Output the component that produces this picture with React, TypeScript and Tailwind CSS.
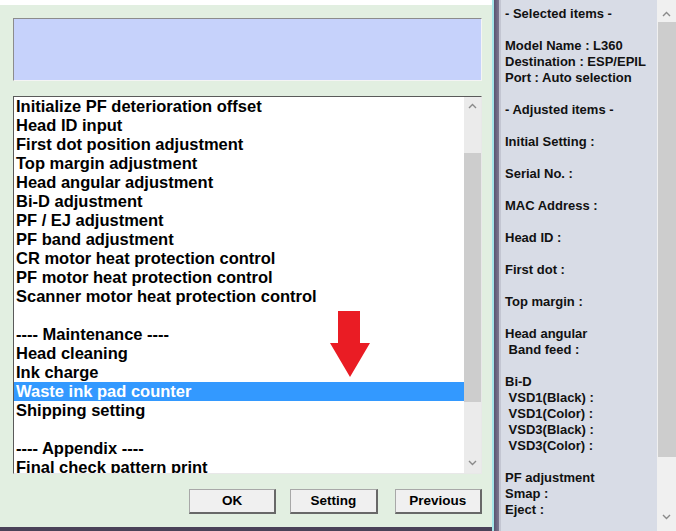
import React from "react";

const rows = [
  "Initialize PF deterioration offset",
  "Head ID input",
  "First dot position adjustment",
  "Top margin adjustment",
  "Head angular adjustment",
  "Bi-D adjustment",
  "PF / EJ adjustment",
  "PF band adjustment",
  "CR motor heat protection control",
  "PF motor heat protection control",
  "Scanner motor heat protection control",
  "",
  "---- Maintenance ----",
  "Head cleaning",
  "Ink charge",
  "Waste ink pad counter",
  "Shipping setting",
  "",
  "---- Appendix ----",
  "Final check pattern print",
];

const info = [
  "- Selected items -",
  "",
  "Model Name : L360",
  "Destination : ESP/EPIL",
  "Port : Auto selection",
  "",
  "- Adjusted items -",
  "",
  "Initial Setting :",
  "",
  "Serial No. :",
  "",
  "MAC Address :",
  "",
  "Head ID :",
  "",
  "First dot :",
  "",
  "Top margin :",
  "",
  "Head angular",
  " Band feed :",
  "",
  "Bi-D",
  " VSD1(Black) :",
  " VSD1(Color) :",
  " VSD3(Black) :",
  " VSD3(Color) :",
  "",
  "PF adjustment",
  "Smap :",
  "Eject :",
];

function Chevron({ up }: { up?: boolean }) {
  return (
    <svg width="9" height="6" viewBox="0 0 9 6" className="block">
      {up ? (
        <polyline points="1,5 4.5,1.5 8,5" fill="none" stroke="#8a8a8a" strokeWidth="1.4" />
      ) : (
        <polyline points="1,1 4.5,4.5 8,1" fill="none" stroke="#8a8a8a" strokeWidth="1.4" />
      )}
    </svg>
  );
}

function Btn({ label, className }: { label: string; className?: string }) {
  return (
    <div
      className={
        "flex h-[25px] items-center justify-center border border-[#a8a8a8] border-r-2 border-b-2 border-r-[#686868] border-b-[#686868] bg-[#f0f0f0] text-[13.5px] font-bold text-black " +
        (className ?? "")
      }
    >
      {label}
    </div>
  );
}

export default function App() {
  return (
    <div
      className="flex h-[531px] w-[676px] overflow-hidden bg-[#3e3850]"
      style={{ fontFamily: '"Liberation Sans", Arial, sans-serif' }}
    >
      {/* Left window */}
      <div className="flex w-[492px] flex-col">
        <div className="h-[5px] bg-white" />
        <div className="flex flex-1 flex-col bg-[#e2efe1] pl-[13px] pr-[10px] pt-[13px]">
          <div className="h-[63px] border border-[#8c8c8c] border-b-[#f4f4f4] border-r-[#f4f4f4] bg-[#c6d2fb]" />
          <div className="relative mt-[15px] flex h-[378px] border border-[#5a5a5a] border-b-[#e8e8e8] border-r-[#e8e8e8] bg-white">
            <div className="flex-1 overflow-hidden">
              {rows.map((r, i) => (
                <div
                  key={i}
                  className={
                    "h-[19px] whitespace-pre pl-[2px] text-[16.5px] font-bold leading-[19px] " +
                    (r === "Waste ink pad counter" ? "bg-[#3399ff] text-white" : "text-black")
                  }
                >
                  {r || " "}
                </div>
              ))}
            </div>
            <div className="flex w-[17px] flex-col bg-[#ebebeb]">
              <div className="flex h-[18px] items-center justify-center">
                <Chevron up />
              </div>
              <div className="mt-[38px] h-[249px] bg-[#cdcdcd]" />
              <div className="flex-1" />
              <div className="flex h-[20px] items-center justify-center">
                <Chevron />
              </div>
            </div>
            <svg
              className="absolute left-[315px] top-[214px]"
              width="42"
              height="67"
              viewBox="0 0 42 67"
            >
              <polygon points="9,0 31,0 31,32 41,32 21,66 1,32 9,32" fill="#ea1c24" />
            </svg>
          </div>
          <div className="mt-[15px] flex">
            <Btn label="OK" className="ml-[176px] w-[88px]" />
            <Btn label="Setting" className="ml-[14px] w-[88px]" />
            <Btn label="Previous" className="ml-[17px] w-[88px]" />
          </div>
        </div>
        <div className="h-[4px] bg-[#4a4258]" />
      </div>

      {/* divider */}
      <div className="w-[2px] bg-[#a4e6ea]" />
      <div className="w-[5px] bg-gradient-to-r from-[#5a5370] to-[#7c7891]" />

      {/* Right panel */}
      <div className="flex-1 border-l-2 border-[#c3c6d2] bg-[#d8dce6] pl-[4px] pt-[6px]">
        {info.map((t, i) => (
          <div
            key={i}
            className="h-[16px] whitespace-pre text-[13px] font-bold leading-[16px] text-[#111]"
          >
            {t || " "}
          </div>
        ))}
      </div>
      <div className="flex w-[19px] flex-col bg-[#f0f0f0]">
        <div className="flex h-[22px] items-center justify-center pt-[6px]">
          <Chevron up />
        </div>
        <div className="ml-[1px] h-[435px] bg-[#cdcdcd]" />
        <div className="flex-1" />
        <div className="flex h-[22px] items-center justify-center pb-[6px]">
          <Chevron />
        </div>
      </div>
    </div>
  );
}
